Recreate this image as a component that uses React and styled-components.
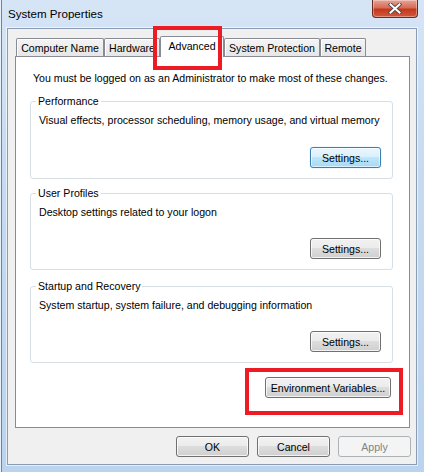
import React from 'react';
import styled, { createGlobalStyle, css } from 'styled-components';

const GlobalStyle = createGlobalStyle`
  html, body {
    margin: 0;
    padding: 0;
    background: #c3d8f0;
  }
  body {
    font-family: "Liberation Sans", Arial, sans-serif;
    font-size: 10.6px;
    color: #000;
  }
  * { box-sizing: border-box; }
`;

// outer aero frame
const Window = styled.div`
  position: relative;
  width: 424px;
  height: 472px;
  padding: 0 7px 7px 7px;
  display: flex;
  flex-direction: column;
  overflow: hidden;
  background: linear-gradient(180deg, #d6e5f6 0%, #c6dbf1 35%, #bcd3ed 100%);
  box-shadow: inset 1px 0 0 #e8f0fa, inset 2px 0 0 #70839b;
`;

const TitleBar = styled.div`
  height: 28px;
  flex: none;
  display: flex;
  justify-content: space-between;
  align-items: flex-start;
`;

const Title = styled.div`
  margin: 7px 0 0 1px;
  line-height: 14px;
  font-size: 11.6px;
  color: #000;
`;

const CloseButton = styled.div`
  width: 46px;
  height: 18px;
  margin-right: -1px;
  display: flex;
  align-items: center;
  justify-content: center;
  border: 1px solid #6b2a20;
  border-top: none;
  border-radius: 0 0 4px 4px;
  background: linear-gradient(180deg, #e7a597 0%, #d66c56 45%, #c3381f 55%, #d2583d 100%);
  box-shadow: inset 0 0 0 1px rgba(255, 255, 255, 0.35);
`;

// client area of the dialog
const Client = styled.div`
  flex: 1;
  display: flex;
  flex-direction: column;
  background: #f0f0f0;
  border: 1px solid #8a9cb3;
  box-shadow: 0 0 0 1px rgba(255, 255, 255, 0.6);
`;

const TabStrip = styled.div`
  position: relative;
  z-index: 1;
  height: 20px;
  margin-top: 7px;
  padding-left: 8px;
  display: flex;
  align-items: flex-end;
`;

const Tab = styled.div`
  width: ${(p) => p.$w}px;
  height: 18px;
  padding-top: 2px;
  line-height: 14px;
  text-align: center;
  white-space: nowrap;
  border: 1px solid #898c95;
  border-bottom: none;
  border-radius: 2px 2px 0 0;
  background: linear-gradient(180deg, #f4f4f4 0%, #e6e6e6 100%);
  box-shadow: inset 1px 1px 0 #fff;
  ${(p) =>
    p.$active &&
    css`
      height: 21px;
      margin-bottom: -1px;
      background: #fff;
      box-shadow: none;
    `}
`;

const Panel = styled.div`
  height: 372px;
  margin: 0 6px 0 7px;
  padding: 14px 16px 0 14px;
  display: flex;
  flex-direction: column;
  background: #fff;
  border: 1px solid #898c95;
`;

const Notice = styled.div`
  margin-left: 3px;
  line-height: 14px;
`;

const Group = styled.fieldset`
  margin: ${(p) => p.$top}px 0 0 0;
  padding: 5px 11px 10px 8px;
  min-width: 0;
  border: 1px solid #d5dfe5;
  border-radius: 3px;
`;

const Legend = styled.legend`
  margin-left: -3px;
  padding: 0 2px;
  line-height: 14px;
`;

const Desc = styled.div`
  line-height: 14px;
  white-space: nowrap;
`;

const ButtonRow = styled.div`
  display: flex;
  justify-content: flex-end;
  margin-top: ${(p) => p.$top}px;
`;

const Button = styled.button`
  width: ${(p) => p.$w}px;
  height: 21px;
  padding: 0;
  font-family: inherit;
  font-size: inherit;
  line-height: 14px;
  color: #000;
  border: 1px solid #707070;
  border-radius: 3px;
  background: linear-gradient(180deg, #f2f2f2 0%, #ebebeb 49%, #dddddd 50%, #cfcfcf 100%);
  box-shadow: inset 0 0 0 1px rgba(255, 255, 255, 0.75);
  ${(p) =>
    p.$focused &&
    css`
      border-color: #3c7fb1;
      background: linear-gradient(180deg, #eaf6fd 0%, #d9f0fc 49%, #bee6fd 50%, #a7d9f5 100%);
      box-shadow: inset 0 0 0 1px rgba(255, 255, 255, 0.6), 0 0 1px #7ec4f0;
    `}
  &:disabled {
    color: #838383;
    border-color: #adb2b5;
    background: #f4f4f4;
    box-shadow: none;
  }
`;

const EnvButton = styled(Button)`
  align-self: flex-end;
  margin: 14px 2px 0 0;
`;

const Footer = styled.div`
  display: flex;
  justify-content: flex-end;
  gap: 8px;
  padding: 8px 5px 0 0;
`;

// red annotation rectangles drawn over the screenshot
const Highlight = styled.div`
  position: absolute;
  left: ${(p) => p.$x}px;
  top: ${(p) => p.$y}px;
  width: ${(p) => p.$w}px;
  height: ${(p) => p.$h}px;
  border: 4px solid #ed1c24;
  pointer-events: none;
  z-index: 5;
`;

const tabs = [
  { label: 'Computer Name', w: 88 },
  { label: 'Hardware', w: 56 },
  { label: 'Advanced', w: 64, active: true },
  { label: 'System Protection', w: 96 },
  { label: 'Remote', w: 46 },
];

const groups = [
  {
    title: 'Performance',
    text: 'Visual effects, processor scheduling, memory usage, and virtual memory',
    top: 9,
    gap: 20,
    focused: true,
  },
  { title: 'User Profiles', text: 'Desktop settings related to your logon', top: 7, gap: 19 },
  {
    title: 'Startup and Recovery',
    text: 'System startup, system failure, and debugging information',
    top: 9,
    gap: 19,
  },
];

function CloseGlyph() {
  return (
    <svg width="14" height="11" viewBox="0 0 14 11">
      <path d="M2.5 1.5 L11.5 9.5 M11.5 1.5 L2.5 9.5" stroke="#4a4a4a" strokeWidth="3.8" strokeLinecap="square" />
      <path d="M2.5 1.5 L11.5 9.5 M11.5 1.5 L2.5 9.5" stroke="#ffffff" strokeWidth="2" strokeLinecap="square" />
    </svg>
  );
}

export default function App() {
  return (
    <>
      <GlobalStyle />
      <Window>
        <TitleBar>
          <Title>System Properties</Title>
          <CloseButton>
            <CloseGlyph />
          </CloseButton>
        </TitleBar>

        <Client>
          <TabStrip>
            {tabs.map((t) => (
              <Tab key={t.label} $w={t.w} $active={t.active}>
                {t.label}
              </Tab>
            ))}
          </TabStrip>

          <Panel>
            <Notice>You must be logged on as an Administrator to make most of these changes.</Notice>
            {groups.map((g) => (
              <Group key={g.title} $top={g.top}>
                <Legend>{g.title}</Legend>
                <Desc>{g.text}</Desc>
                <ButtonRow $top={g.gap}>
                  <Button $w={71} $focused={g.focused}>Settings...</Button>
                </ButtonRow>
              </Group>
            ))}
            <EnvButton $w={126}>Environment Variables...</EnvButton>
          </Panel>

          <Footer>
            <Button $w={73}>OK</Button>
            <Button $w={73}>Cancel</Button>
            <Button $w={73} disabled>
              Apply
            </Button>
          </Footer>
        </Client>

        <Highlight $x={153} $y={26} $w={69} $h={44} />
        <Highlight $x={245} $y={368} $w={158} $h={47} />
      </Window>
    </>
  );
}
